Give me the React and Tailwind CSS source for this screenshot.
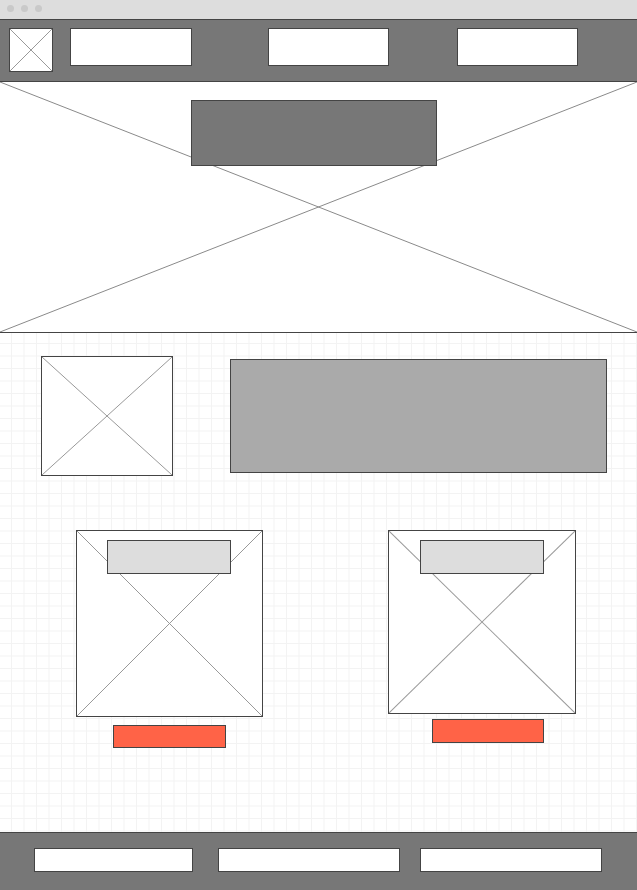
const Cross = ({ color = "#999" }) => (
  <svg
    className="absolute inset-0 w-full h-full pointer-events-none"
    viewBox="0 0 100 100"
    preserveAspectRatio="none"
  >
    <line x1="0" y1="0" x2="100" y2="100" stroke={color} strokeWidth="1" vectorEffect="non-scaling-stroke" />
    <line x1="100" y1="0" x2="0" y2="100" stroke={color} strokeWidth="1" vectorEffect="non-scaling-stroke" />
  </svg>
);

const Placeholder = ({ className = "", children }) => (
  <div className={`relative bg-white border border-[#444] ${className}`}>
    <Cross />
    {children}
  </div>
);

const NavBox = ({ className = "" }) => (
  <div className={`h-[38px] bg-white border border-[#444] ${className}`} />
);

const Card = ({ size, labelOffset, button }) => (
  <div className="flex flex-col">
    <Placeholder className={size}>
      <div className={`relative mt-[9px] w-[124px] h-[34px] bg-[#ddd] border border-[#444] ${labelOffset}`} />
    </Placeholder>
    <div className={`bg-[#ff6347] border border-[#444] ${button}`} />
  </div>
);

export default function App() {
  return (
    <div className="w-[637px] h-[890px] flex flex-col bg-white overflow-hidden font-['Liberation_Sans',sans-serif]">
      {/* window chrome */}
      <div className="h-[19px] shrink-0 bg-[#ddd] flex items-center gap-[7px] pl-[7px] pb-[3px]">
        <span className="w-[7px] h-[7px] rounded-full bg-[#c9c9c9]" />
        <span className="w-[7px] h-[7px] rounded-full bg-[#c9c9c9]" />
        <span className="w-[7px] h-[7px] rounded-full bg-[#c9c9c9]" />
      </div>

      {/* header */}
      <header className="h-[63px] shrink-0 bg-[#777] border-y border-[#444] flex items-start pt-[8px] pl-[9px]">
        <Placeholder className="w-[44px] h-[44px]" />
        <NavBox className="ml-[17px] w-[122px]" />
        <NavBox className="ml-[76px] w-[121px]" />
        <NavBox className="ml-[68px] w-[121px]" />
      </header>

      {/* hero */}
      <section className="relative h-[251px] shrink-0 bg-white border-b border-[#444]">
        <Cross color="#8a8a8a" />
        <div className="relative ml-[191px] mt-[18px] w-[246px] h-[66px] bg-[#777] border border-[#444]" />
      </section>

      {/* content */}
      <main className="flex-1 flex flex-col bg-white bg-[linear-gradient(to_right,#f3f3f3_1px,transparent_1px),linear-gradient(to_bottom,#f3f3f3_1px,transparent_1px)] bg-[size:12.5px_12.5px] bg-[position:11px_10px]">
        <div className="flex items-center mt-[23px] pl-[41px]">
          <Placeholder className="w-[132px] h-[120px]" />
          <div className="ml-[57px] w-[377px] h-[114px] bg-[#aaa] border border-[#444]" />
        </div>

        <div className="flex items-start mt-[54px] pl-[76px]">
          <Card
            size="w-[187px] h-[187px]"
            labelOffset="ml-[30px]"
            button="ml-[37px] mt-[8px] w-[113px] h-[23px]"
          />
          <div className="ml-[125px]">
            <Card
              size="w-[188px] h-[184px]"
              labelOffset="ml-[31px]"
              button="ml-[44px] mt-[5px] w-[112px] h-[24px]"
            />
          </div>
        </div>
      </main>

      {/* footer */}
      <footer className="h-[58px] shrink-0 bg-[#777] border-t border-[#444] flex items-start pt-[15px] pl-[34px]">
        <div className="w-[159px] h-[24px] bg-white border border-[#444]" />
        <div className="ml-[25px] w-[182px] h-[24px] bg-white border border-[#444]" />
        <div className="ml-[20px] w-[182px] h-[24px] bg-white border border-[#444]" />
      </footer>
    </div>
  );
}
